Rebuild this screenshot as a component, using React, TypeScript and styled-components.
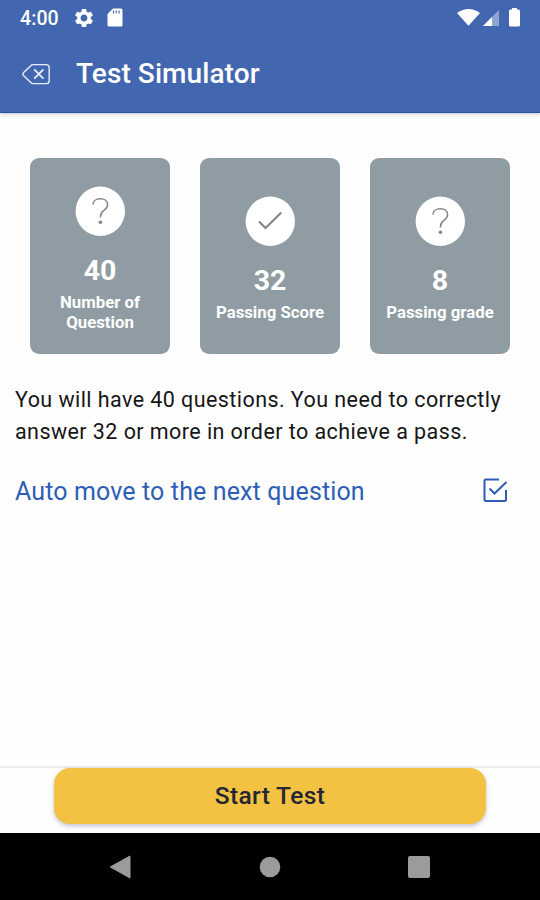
import React, { useState } from "react";
import styled, { createGlobalStyle } from "styled-components";

const GlobalStyle = createGlobalStyle`
  * { box-sizing: border-box; }
  body {
    margin: 0;
    background: #fff;
    font-family: Roboto, "Liberation Sans", sans-serif;
  }
`;

const Screen = styled.div`
  width: 540px;
  height: 900px;
  display: flex;
  flex-direction: column;
  background: #fefefe;
  overflow: hidden;
`;

const Header = styled.header`
  height: 113px;
  flex: none;
  background: #4267b0;
  color: #fff;
  border-bottom: 1px solid #1f55a5;
  box-shadow: 0 1px 4px rgba(70, 50, 60, 0.3);
`;

const StatusBar = styled.div`
  height: 36px;
  padding: 0 20px 0 20px;
  display: flex;
  align-items: center;
  justify-content: space-between;
`;

const StatusGroup = styled.div`
  display: flex;
  align-items: center;
`;

const Clock = styled.span`
  width: 55px;
  padding-top: 2px;
  font-size: 19.5px;
  font-weight: 500;
  line-height: 34px;
  letter-spacing: 0.1px;
`;

const Icon = styled.svg<{ $gap?: number }>`
  display: block;
  flex: none;
  margin-left: ${(p) => p.$gap ?? 0}px;
`;

const TitleBar = styled.div`
  height: 76px;
  display: flex;
  align-items: center;
  padding-left: 21px;
`;

const BackButton = styled.button`
  width: 30px;
  height: 24px;
  margin: 0 25px 0 0;
  padding: 0;
  border: 0;
  background: none;
`;

const Title = styled.h1`
  margin: 0;
  font-size: 28px;
  font-weight: 500;
  line-height: 36px;
  letter-spacing: 0.08px;
`;

const Content = styled.main`
  flex: 1;
  padding: 45px 15px 0;
`;

const Cards = styled.section`
  display: grid;
  grid-template-columns: repeat(3, 140px);
  gap: 30px;
  padding-left: 15px;
`;

const Card = styled.article`
  height: 196px;
  padding: 28px 12px 0;
  display: flex;
  flex-direction: column;
  align-items: center;
  border-radius: 9px;
  background: #8f9ca3;
  color: #fff;
  text-align: center;

  & + & {
    padding-top: 38px;
  }
`;

const CardValue = styled.strong`
  margin-top: 17px;
  font-size: 28.5px;
  font-weight: 700;
  line-height: 36px;
`;

const CardLabel = styled.span<{ $narrow?: boolean }>`
  margin-top: 3px;
  width: ${(p) => (p.$narrow ? "100px" : "auto")};
  font-size: 16.8px;
  font-weight: 700;
  line-height: 20px;
  white-space: ${(p) => (p.$narrow ? "normal" : "nowrap")};
`;

const Description = styled.p`
  margin: 30px 0 0;
  color: #161616;
  font-size: 21.5px;
  line-height: 32.4px;
  letter-spacing: 0.43px;
  white-space: nowrap;
`;

const Option = styled.label`
  margin-top: 25px;
  padding-right: 17px;
  height: 36px;
  display: flex;
  align-items: center;
  justify-content: space-between;
  color: #2d5db5;
`;

const OptionText = styled.span`
  font-size: 25px;
  line-height: 36px;
  letter-spacing: 0.13px;
  white-space: nowrap;
`;

const CheckButton = styled.button`
  margin-bottom: 3px;
  padding: 0;
  border: 0;
  background: none;
`;

const Footer = styled.footer`
  height: 67px;
  flex: none;
  padding: 0 54px;
  border-top: 2px solid #ededed;
`;

const StartButton = styled.button`
  display: block;
  width: 432px;
  height: 56px;
  padding: 0;
  border: 0;
  border-radius: 16px;
  background: #f3c242;
  box-shadow: 0 2px 4px rgba(40, 40, 80, 0.28);
  color: #222732;
  font-family: inherit;
  font-size: 24.5px;
  font-weight: 500;
  line-height: 56px;
  letter-spacing: 0.35px;
`;

const NavBar = styled.nav`
  height: 67px;
  flex: none;
  background: #000;
  display: flex;
  align-items: center;
  justify-content: space-between;
  padding: 0 110px 0 109px;
`;

const QuestionIcon = () => (
  <Icon width="50" height="50" viewBox="0 0 50 50" fill="none">
    <circle cx="25.300" cy="25.300" r="24.700" fill="#fff" />
    <path
      d="M18 18.600C18 15 21.200 12.800 25.300 12.800c4.300 0 7.300 2.400 7.300 6 0 2.700-1.300 4-3.600 5.600-2.700 1.900-3.500 3.200-3.500 5.800v1.300"
      stroke="#858585"
      strokeWidth="1.500"
    />
    <circle cx="25.400" cy="36.200" r="1.800" fill="#858585" />
  </Icon>
);

const CheckIcon = () => (
  <Icon width="50" height="50" viewBox="0 0 50 50" fill="none">
    <circle cx="25.300" cy="25.300" r="24.700" fill="#fff" />
    <path d="M14 25.500 20.500 32 36.300 16.500" stroke="#858585" strokeWidth="2.100" />
  </Icon>
);

const stats = [
  { icon: <QuestionIcon />, value: 40, label: "Number of Question", narrow: true },
  { icon: <CheckIcon />, value: 32, label: "Passing Score" },
  { icon: <QuestionIcon />, value: 8, label: "Passing grade" },
];

export default function App() {
  const [autoMove, setAutoMove] = useState(true);
  return (
    <>
      <GlobalStyle />
      <Screen>
        <Header>
          <StatusBar>
            <StatusGroup>
              <Clock>4:00</Clock>
              <Icon width="18" height="20" viewBox="2.500 2 19 20" fill="#fff">
                <path d="M19.140 12.940c.04-.3.060-.61.060-.94 0-.32-.02-.64-.07-.94l2.030-1.580a.49.49 0 0 0 .12-.61l-1.920-3.320a.488.488 0 0 0-.59-.22l-2.390.96c-.5-.38-1.030-.7-1.620-.94l-.36-2.540a.484.484 0 0 0-.48-.41h-3.840c-.24 0-.43.17-.47.41l-.36 2.540c-.59.24-1.130.57-1.620.94l-2.390-.96c-.22-.08-.47 0-.59.22L2.740 8.870c-.12.21-.08.47.12.61l2.030 1.580c-.05.3-.09.63-.09.94s.02.64.07.94l-2.030 1.580a.49.49 0 0 0-.12.61l1.920 3.320c.12.22.37.29.59.22l2.390-.96c.5.38 1.030.7 1.620.94l.36 2.540c.05.24.24.41.48.41h3.840c.24 0 .44-.17.47-.41l.36-2.540c.59-.24 1.130-.56 1.620-.94l2.390.96c.22.08.47 0 .59-.22l1.920-3.320c.12-.22.07-.47-.12-.61l-2.010-1.580zM12 15.600A3.610 3.610 0 0 1 8.400 12c0-1.980 1.620-3.600 3.600-3.600s3.600 1.620 3.600 3.600-1.620 3.600-3.600 3.600z" />
              </Icon>
              <Icon $gap={14} width="16" height="20" viewBox="0 0 16 20">
                <path d="M6 .5h8q1.500 0 1.500 1.500v15q0 1.500-1.500 1.500H2Q.5 18.500.5 17V6z" fill="#fff" />
                <path d="M6.500 2.500v3M9.300 2.500v3M12.100 2.500v3" stroke="#6683bf" strokeWidth="1.400" />
              </Icon>
            </StatusGroup>
            <StatusGroup>
              <Icon width="23" height="18" viewBox="0 0 23 18">
                <path d="M0 4Q11.500-4 23 4L11.500 16.800z" fill="#fff" />
              </Icon>
              <Icon $gap={3} width="17" height="18" viewBox="0 0 17 18">
                <path d="M0 17 16 1v16z" fill="#8fa5d1" />
                <path d="M0 17 9 8v9z" fill="#fff" />
              </Icon>
              <Icon $gap={9} width="11" height="20" viewBox="0 0 11 20">
                <path d="M3 0h5v1.500h1.500Q11 1.500 11 3v14q0 1.500-1.500 1.500h-8Q0 18.500 0 17V3Q0 1.500 1.500 1.500H3z" fill="#fff" />
              </Icon>
            </StatusGroup>
          </StatusBar>
          <TitleBar>
            <BackButton aria-label="Back">
              <Icon width="30" height="24" viewBox="0 0 30 24" fill="none" stroke="#e8eefb" strokeLinejoin="round">
                <path d="M12.300 2.600H25q3.200 0 3.200 3.200v12.600q0 3.200-3.200 3.200H12.300q-1.500 0-2.500-1.100L2.200 13.200q-1-1 0-2.100l7.600-7.400q1-1.100 2.500-1.100z" strokeWidth="1.400" />
                <path d="m13.200 7.400 9.200 9.200m0-9.200-9.200 9.200" strokeWidth="1.800" />
              </Icon>
            </BackButton>
            <Title>Test Simulator</Title>
          </TitleBar>
        </Header>
        <Content>
          <Cards>
            {stats.map((s) => (
              <Card key={s.label}>
                {s.icon}
                <CardValue>{s.value}</CardValue>
                <CardLabel $narrow={s.narrow}>{s.label}</CardLabel>
              </Card>
            ))}
          </Cards>
          <Description>
            You will have 40 questions. You need to correctly
            <br />
            answer 32 or more in order to achieve a pass.
          </Description>
          <Option>
            <OptionText>Auto move to the next question</OptionText>
            <CheckButton
              role="checkbox"
              aria-checked={autoMove}
              aria-label="Auto move"
              onClick={() => setAutoMove(!autoMove)}
            >
              <Icon width="26" height="26" viewBox="0 0 26 26" fill="none" stroke="#2d5db5" strokeWidth="2">
                <path d="M17 2.500H4Q2.500 2.500 2.500 4v18.500Q2.500 24 4 24h18.500q1.500 0 1.500-1.500V13" />
                {autoMove && <path d="m7.500 11.500 5 5L24.500 5" />}
              </Icon>
            </CheckButton>
          </Option>
        </Content>
        <Footer>
          <StartButton>Start Test</StartButton>
        </Footer>
        <NavBar>
          <Icon width="22" height="24" viewBox="0 0 22 24">
            <path d="M1.200 12 21 1v22z" fill="#9b9b9b" stroke="#9b9b9b" strokeLinejoin="round" />
          </Icon>
          <Icon width="22" height="22" viewBox="0 0 22 22">
            <circle cx="11" cy="11" r="10.300" fill="#9b9b9b" />
          </Icon>
          <Icon width="22" height="22" viewBox="0 0 22 22">
            <rect width="22" height="22" rx="2" fill="#9b9b9b" />
          </Icon>
        </NavBar>
      </Screen>
    </>
  );
}
